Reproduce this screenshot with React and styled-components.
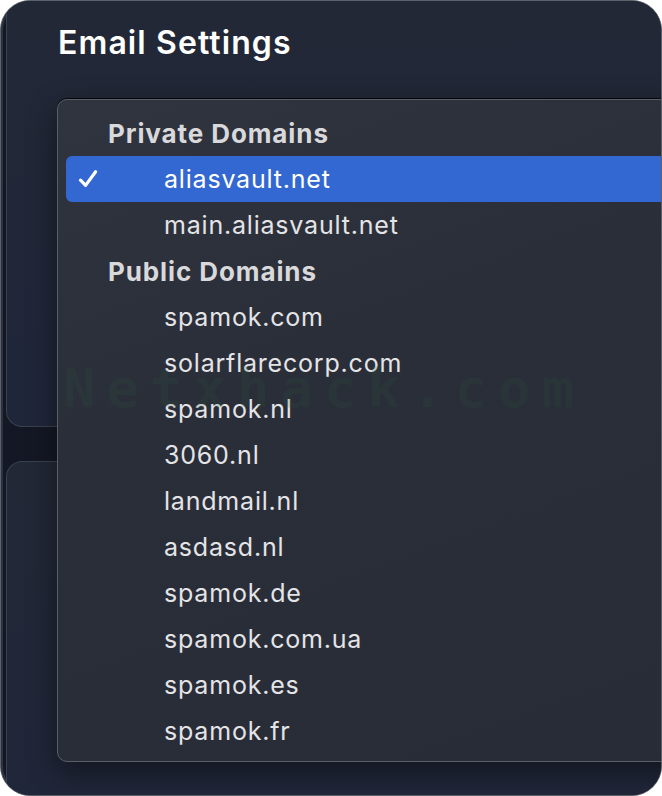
import styled, { createGlobalStyle } from "styled-components";

const GlobalStyle = createGlobalStyle`
  html, body {
    margin: 0;
    padding: 0;
    background: #ffffff;
  }
  body {
    font-family: Inter, "Noto Sans", "Liberation Sans", sans-serif;
    -webkit-font-smoothing: antialiased;
  }
`;

const Window = styled.div`
  position: relative;
  width: 662px;
  height: 796px;
  box-sizing: border-box;
  border: 1px solid #5c616b;
  border-radius: 30px;
  overflow: hidden;
  background: #141824;
  box-shadow: inset 2px 0 0 #2c3240;
`;

const Content = styled.div`
  display: flex;
  flex-direction: column;
  gap: 34px;
  padding-left: 5px;
`;

const Card = styled.section`
  height: ${(p) => p.$height}px;
  box-sizing: border-box;
  border: 1px solid #3b414e;
  border-right: none;
  border-top: ${(p) => (p.$top ? "1px solid #3b414e" : "none")};
  border-radius: ${(p) => (p.$top ? "16px 0 0 16px" : "0 0 0 16px")};
  background: linear-gradient(180deg, #222836 0%, #20263a 100%);
  padding: ${(p) => p.$pad || "0"};
`;

const Title = styled.h1`
  margin: 0;
  color: #ffffff;
  font-size: 32px;
  font-weight: 600;
  letter-spacing: 1.1px;
  line-height: 40px;
`;

const CardText = styled.p`
  margin: 0;
  color: #8c9099;
  font-size: 20px;
  line-height: 24px;
`;

const Watermark = styled.div`
  position: absolute;
  left: 62px;
  top: 356px;
  font-family: "DejaVu Sans Mono", monospace;
  font-weight: 700;
  font-size: 54px;
  letter-spacing: 11px;
  color: rgba(40, 90, 60, 0.18);
  pointer-events: none;
  z-index: 3;
`;

const Menu = styled.div`
  position: absolute;
  left: 56px;
  top: 98px;
  width: 640px;
  box-sizing: border-box;
  padding: 10px 8px 7px;
  border: 1px solid #5a5e67;
  border-radius: 10px;
  background: linear-gradient(160deg, #30343e 0%, #2a2e38 40%, #282c37 100%);
  box-shadow: 0 -1px 0 #050609, 0 10px 30px rgba(0, 0, 0, 0.45);
  z-index: 2;
`;

const GroupLabel = styled.div`
  height: 46px;
  display: flex;
  align-items: center;
  padding-left: 42px;
  color: #d9d9dc;
  font-size: 26px;
  font-weight: 700;
  letter-spacing: 0.9px;
`;

const Option = styled.div`
  height: 46px;
  display: flex;
  align-items: center;
  border-radius: 6px;
  background: ${(p) => (p.$selected ? "#3367d1" : "transparent")};
  color: ${(p) => (p.$selected ? "#ffffff" : "#e4e4e7")};
  font-size: 25px;
  letter-spacing: 0.8px;
`;

const CheckSlot = styled.span`
  width: 98px;
  flex-shrink: 0;
  display: flex;
  align-items: center;
  padding-left: 12px;
  box-sizing: border-box;
`;

const Check = () => (
  <svg width="20" height="20" viewBox="0 0 20 20" fill="none">
    <path
      d="M2.5 11.2 L7.6 16.4 L17.6 2.8"
      stroke="#ffffff"
      strokeWidth="3.2"
      strokeLinecap="round"
      strokeLinejoin="round"
    />
  </svg>
);

const groups = [
  {
    label: "Private Domains",
    items: ["aliasvault.net", "main.aliasvault.net"],
  },
  {
    label: "Public Domains",
    items: [
      "spamok.com",
      "solarflarecorp.com",
      "spamok.nl",
      "3060.nl",
      "landmail.nl",
      "asdasd.nl",
      "spamok.de",
      "spamok.com.ua",
      "spamok.es",
      "spamok.fr",
    ],
  },
];

const selected = "aliasvault.net";

export default function App() {
  return (
    <>
      <GlobalStyle />
      <Window>
        <Content>
          <Card $height={426} $pad="22px 0 0 51px">
            <Title>Email Settings</Title>
          </Card>
          <Card $top $height={400} $pad="276px 0 0 235px">
            <CardText>Setting slog</CardText>
          </Card>
        </Content>
        <Menu>
          {groups.map((g) => (
            <div key={g.label}>
              <GroupLabel>{g.label}</GroupLabel>
              {g.items.map((item) => (
                <Option key={item} $selected={item === selected}>
                  <CheckSlot>{item === selected && <Check />}</CheckSlot>
                  {item}
                </Option>
              ))}
            </div>
          ))}
        </Menu>
        <Watermark>Netxhack.com</Watermark>
      </Window>
    </>
  );
}
